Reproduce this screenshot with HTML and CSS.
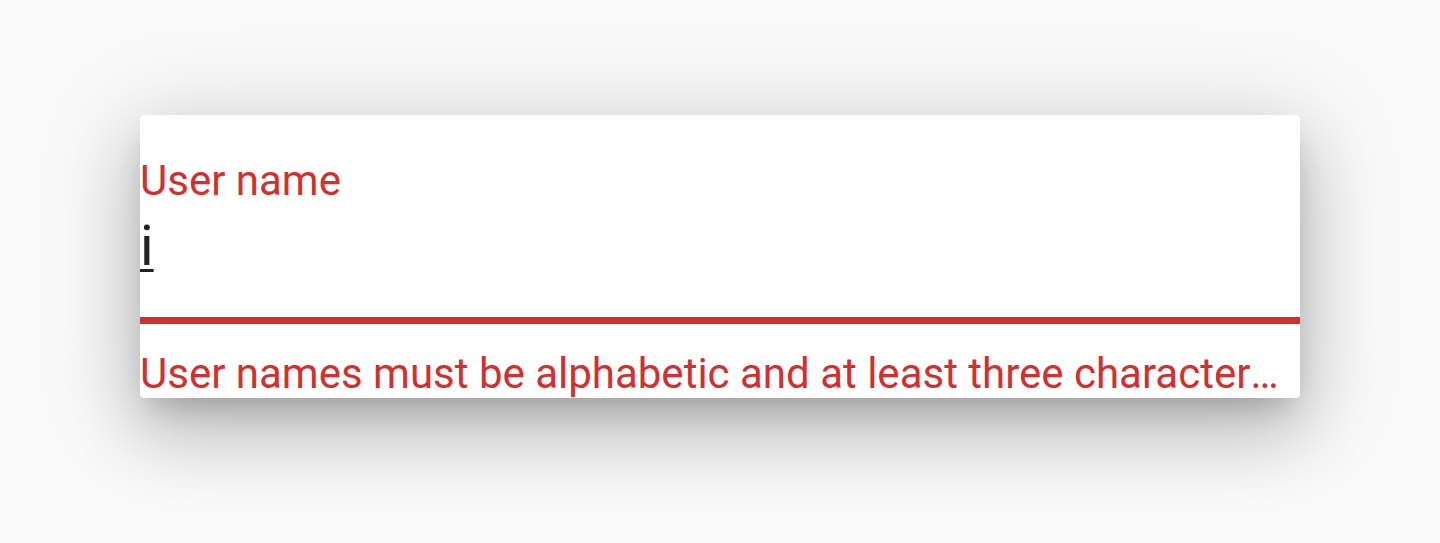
FILE: index.html
```html
<!DOCTYPE html>
<html>
	<head>
		<meta charset="utf-8">
		<title>User name</title>
		<link rel="stylesheet" href="styles.css">
	</head>
	<body>
		<div class="stage">
			<!-- text field card -->
			<div class="field-card">
				<label class="field-label" for="user-name">User name</label>
				<div class="field-input" id="user-name">i</div>
				<div class="field-line"></div>
				<div class="field-error">User names must be alphabetic and at least three characters long.</div>
			</div>
		</div>
	</body>
</html>
```

FILE: styles.css
```css
/* base */
* {
	margin: 0;
	padding: 0;
	box-sizing: border-box;
}

body {
	font-family: Roboto, "Liberation Sans", sans-serif;
	background-color: #fafafa;
	height: 100vh;
	overflow: hidden;
}

.stage {
	padding: 115px 140px 0;
}

/* card */
.field-card {
	width: 1160px;
	height: 283px;
	padding-top: 41px;
	background-color: #fff;
	border-radius: 4px;
	box-shadow: 0 36px 70px 4px rgba(0,0,0,0.16),
		0 14px 100px 16px rgba(0,0,0,0.12),
		0 16px 30px -10px rgba(0,0,0,0.2);
}

.field-label {
	display: block;
	font-size: 42px;
	line-height: 50px;
	color: #d32f2f;
}

.field-input {
	margin-top: 7px;
	font-size: 56px;
	line-height: 66px;
	color: #212121;
	text-decoration: underline;
	text-decoration-thickness: 3px;
	text-underline-offset: 4px;
}

.field-line {
	margin-top: 38px;
	height: 7px;
	background-color: #d32f2f;
}

.field-error {
	margin-top: 25px;
	padding-right: 20px;
	font-size: 42px;
	line-height: 49px;
	color: #d32f2f;
	white-space: nowrap;
	overflow: hidden;
	text-overflow: ellipsis;
}
```
